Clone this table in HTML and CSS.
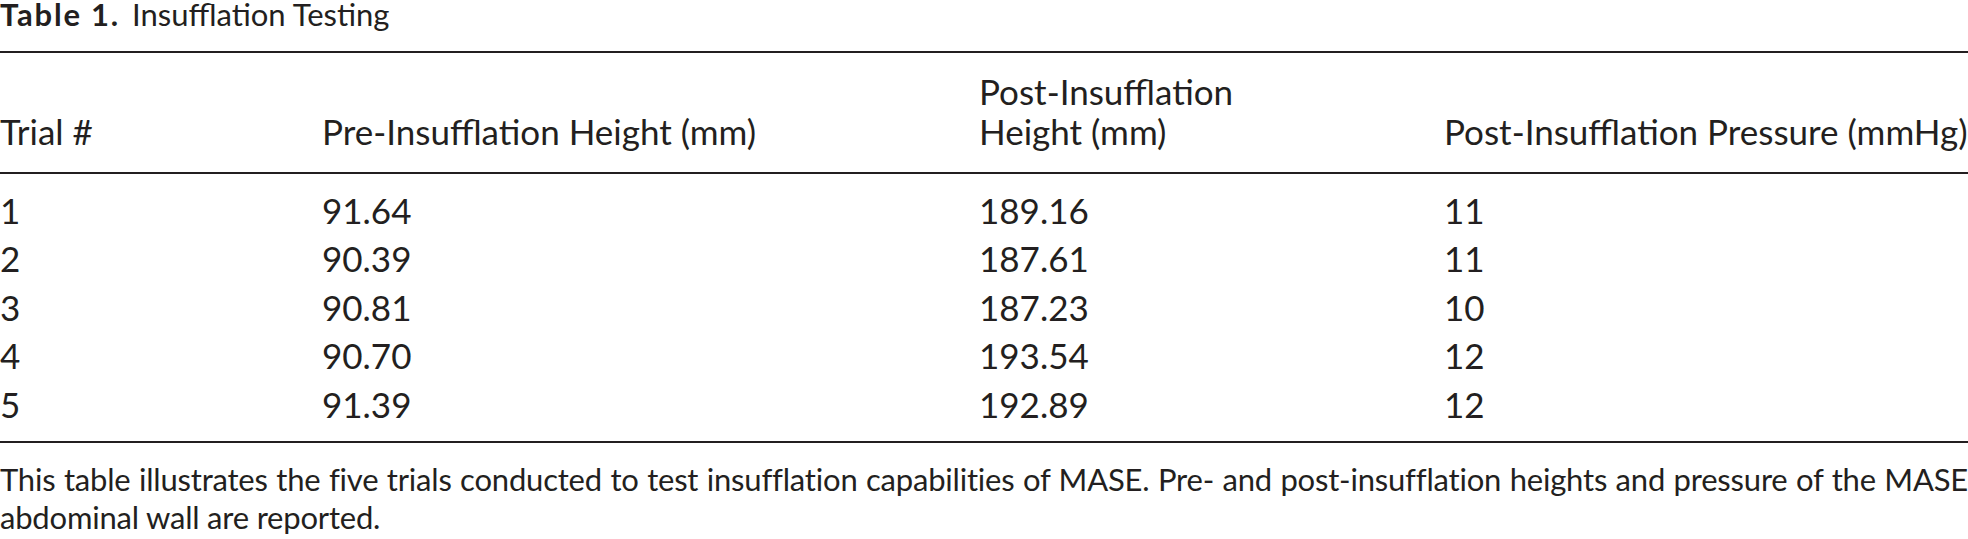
FILE: index.html
```html
<!DOCTYPE html>
<html lang="en">
<head>
<meta charset="utf-8">
<title>Table 1. Insufflation Testing</title>
<link rel="stylesheet" href="styles.css">
</head>
<body>
<div class="figure">
  <p class="title"><b class="label">Table 1.</b> Insufflation Testing</p>
  <table class="data">
    <colgroup>
      <col class="c1"><col class="c2"><col class="c3"><col class="c4">
    </colgroup>
    <thead>
      <tr>
        <th>Trial #</th>
        <th>Pre-Insufflation Height (mm)</th>
        <th>Post-Insufflation<br>Height (mm)</th>
        <th>Post-Insufflation Pressure (mmHg)</th>
      </tr>
    </thead>
    <tbody>
      <tr class="first"><td>1</td><td>91.64</td><td>189.16</td><td>11</td></tr>
      <tr><td>2</td><td>90.39</td><td>187.61</td><td>11</td></tr>
      <tr><td>3</td><td>90.81</td><td>187.23</td><td>10</td></tr>
      <tr><td>4</td><td>90.70</td><td>193.54</td><td>12</td></tr>
      <tr class="last"><td>5</td><td>91.39</td><td>192.89</td><td>12</td></tr>
    </tbody>
  </table>
  <p class="note"><span class="line full">This table illustrates the five trials conducted to test insufflation capabilities of MASE. Pre- and post-insufflation heights and pressure of the MASE</span><span class="line">abdominal wall are reported.</span></p>
</div>
</body>
</html>
```

FILE: styles.css
```css
html, body {
  margin: 0;
  padding: 0;
  background: #ffffff;
  overflow: hidden;
}

.figure {
  width: 1968px;
  color: #231f20;
  font-family: "Lato", "Open Sans", sans-serif;
}

.title {
  margin: 0 0 23px;
  font-size: 31px;
  line-height: 28px;
  white-space: nowrap;
}

.title .label {
  font-weight: 700;
  letter-spacing: 1.8px;
  margin-right: 4px;
}

.data {
  width: 1968px;
  table-layout: fixed;
  border-collapse: separate;
  border-spacing: 0;
  font-size: 35px;
  letter-spacing: 0;
}

.c1 { width: 322px; }
.c2 { width: 657px; }
.c3 { width: 465px; }
.c4 { width: 524px; }

.data th {
  font-weight: 400;
  text-align: left;
  vertical-align: bottom;
  white-space: nowrap;
  line-height: 40px;
  padding: 18px 0 21px;
  border-top: 2px solid #231f20;
  border-bottom: 2px solid #231f20;
}

.data td {
  padding: 0;
  line-height: 48.4px;
  white-space: nowrap;
}

.data tr.first td {
  padding-top: 12px;
}

.data tr.last td {
  padding-bottom: 13px;
  border-bottom: 2px solid #231f20;
}

.note {
  margin: 17px 0 0;
  font-size: 31px;
  line-height: 38px;
  letter-spacing: -0.2px;
}

.note .line {
  display: block;
}

.note .line.full {
  white-space: nowrap;
  text-align: justify;
  text-align-last: justify;
}
```
